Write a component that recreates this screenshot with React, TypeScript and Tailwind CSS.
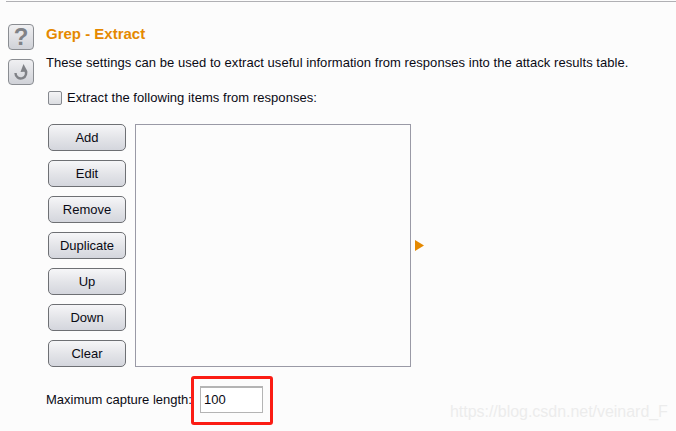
import React from "react";

const btn = ["Add", "Edit", "Remove", "Duplicate", "Up", "Down", "Clear"];

export default function App() {
  return (
    <div className="relative w-[676px] h-[431px] overflow-hidden bg-[#fcfcfc] text-[13px] text-[#0a0a14] font-['Liberation_Sans',Arial,sans-serif]">
      <div className="ml-[6px] mt-px h-px bg-[#b0b0b4]" />
      <div className="flex pl-[8px] pt-[22px]">
        <div className="flex flex-col gap-[9px] w-[38px] shrink-0">
          <div className="w-[26px] h-[26px] rounded-[4px] border border-[#8a8d92] bg-gradient-to-b from-[#f0f0f2] to-[#d0d2d8] flex items-center justify-center text-[24px] leading-none font-bold text-[#808287]">?</div>
          <div className="w-[26px] h-[26px] rounded-[4px] border border-[#8a8d92] bg-gradient-to-b from-[#f0f0f2] to-[#d0d2d8] flex items-center justify-center">
            <svg width="20" height="20" viewBox="0 0 20 20" fill="none">
              <path d="M4.5 11a5.3 5.3 0 1 0 9.2-3.4" stroke="#808287" strokeWidth="2.4" fill="none" />
              <path d="M9.5 10 L12.5 2 L16.5 9.5 Z" fill="#808287" />
            </svg>
          </div>
        </div>
        <div className="flex flex-col min-w-0">
          <div className="text-[15px] leading-[20px] font-bold text-[#e58900]">Grep - Extract</div>
          <div className="mt-[11px] leading-[16px] whitespace-nowrap tracking-[0.05px]">These settings can be used to extract useful information from responses into the attack results table.</div>
          <label className="flex items-center mt-[19px] ml-[2px] h-[16px]">
            <span className="w-[14px] h-[14px] rounded-[2px] border border-[#85888e] bg-gradient-to-b from-[#f4f4f6] to-[#dcdee2]" />
            <span className="ml-[5px] leading-[16px] whitespace-nowrap tracking-[0.05px]">Extract the following items from responses:</span>
          </label>
          <div className="flex mt-[18px] ml-[2px] items-stretch">
            <div className="flex flex-col gap-[9px] w-[78px]">
              {btn.map((b) => (
                <button key={b} className="h-[27px] rounded-[5px] border border-[#6e7074] bg-gradient-to-b from-[#f6f6f8] via-[#e4e5e9] to-[#d4d6dd] text-center text-[13px] leading-[24px] text-[#0a0a14]">
                  {b}
                </button>
              ))}
            </div>
            <div className="ml-[9px] w-[276px] border border-[#9a9aa6] bg-[#fcfcfc]" />
            <div className="flex items-center ml-[4px]">
              <svg width="9" height="11" viewBox="0 0 9 11"><path d="M0 0 L9 5.5 L0 11 Z" fill="#e58900" /></svg>
            </div>
          </div>
          <div className="flex items-center mt-[19px] h-[27px]">
            <span className="whitespace-nowrap w-[154px] leading-[16px]">Maximum capture length:</span>
            <div className="w-[63px] h-[27px] border border-[#b4b4b4] border-t-2 bg-white pl-[3px] leading-[24px] text-[#0a0a14]">100</div>
          </div>
        </div>
      </div>
      <div className="absolute left-[191px] top-[376px] w-[82px] h-[49px] rounded-[3px] border-[3px] border-[#fb1c14]" />
      <div className="absolute left-[450px] top-[403px] text-[16px] leading-[18px] tracking-[-0.03px] whitespace-nowrap text-[#ececec]">https://blog.csdn.net/veinard_F</div>
    </div>
  );
}
